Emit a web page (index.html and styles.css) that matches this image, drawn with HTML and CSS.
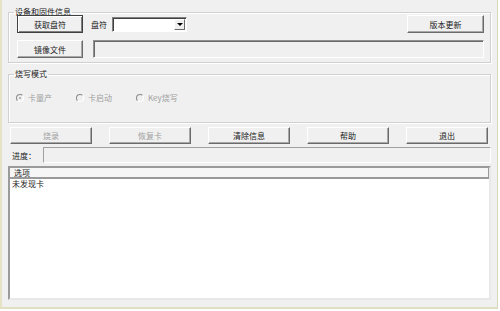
FILE: index.html
```html
<!DOCTYPE html>
<html lang="zh-CN">

<head>
  <meta charset="UTF-8">
  <meta name="viewport" content="width=device-width, initial-scale=1.0">
  <title>量产工具</title>
  <link rel="stylesheet" href="styles.css">
</head>

<body>
  <div class="window">
    <fieldset class="group group-device">
      <legend>设备和固件信息</legend>
      <div class="row row-first">
        <button class="btn btn-default btn-side">获取盘符</button>
        <span class="label">盘符</span>
        <div class="combo"><span class="combo-arrow"></span></div>
        <button class="btn btn-version">版本更新</button>
      </div>
      <div class="row">
        <button class="btn btn-side">镜像文件</button>
        <div class="textbox"></div>
      </div>
    </fieldset>

    <fieldset class="group group-mode">
      <legend>烧写模式</legend>
      <div class="radios">
        <label class="radio-item"><span class="radio checked"></span>卡量产</label>
        <label class="radio-item"><span class="radio"></span>卡启动</label>
        <label class="radio-item"><span class="radio"></span>Key烧写</label>
      </div>
    </fieldset>

    <div class="actions">
      <button class="btn btn-action" disabled>烧录</button>
      <button class="btn btn-action" disabled>恢复卡</button>
      <button class="btn btn-action">清除信息</button>
      <button class="btn btn-action">帮助</button>
      <button class="btn btn-action">退出</button>
    </div>

    <div class="progress-row">
      <span class="progress-label">进度：</span>
      <div class="progress"></div>
    </div>

    <div class="list">
      <div class="list-header">选项</div>
      <div class="list-item">未发现卡</div>
    </div>
  </div>
</body>

</html>
```

FILE: styles.css
```css
/* 全局样式 */
body {
  margin: 0;
  background-color: #fff;
  font-family: "Noto Sans CJK SC", "Noto Sans", sans-serif;
  font-size: 8px;
  color: #1a1a1a;
}

/* 窗口 */
.window {
  width: 498px;
  height: 309px;
  box-sizing: border-box;
  background-color: #f0f0f0;
  border-left: 2px solid #e4e4c4;
  border-right: 1px solid #d8d8b8;
  border-bottom: 2px solid #e0e0c0;
  padding: 0 6px;
  display: flex;
  flex-direction: column;
}

/* 分组框 */
.group {
  margin: 0;
  min-width: 0;
  border: 1px solid #d0d0d0;
  box-shadow: inset 1px 1px 0 #fff, 1px 1px 0 #fff;
  padding: 0 6px 4px 8px;
}

.group legend {
  margin-left: -3px;
  padding: 0 1px;
  line-height: 12px;
}

.group-device {
  margin-top: 6px;
}

.group-mode {
  margin-top: 5px;
  padding-bottom: 18px;
}

.row {
  display: flex;
  align-items: center;
  height: 18px;
  margin-top: 7px;
}

.row-first {
  margin-top: -3px;
}

/* 按钮 */
.btn {
  height: 18px;
  box-sizing: border-box;
  padding: 0;
  font: inherit;
  color: #1a1a1a;
  background-color: #f0f0f0;
  border: 1px solid;
  border-color: #fff #6a6a6a #6a6a6a #fff;
  box-shadow: inset -1px -1px 0 #a8a8a8;
}

.btn:disabled {
  color: #a0a0a0;
}

.btn-default {
  border-color: #404040;
  box-shadow: inset 1px 1px 0 #fff, inset -1px -1px 0 #808080;
}

.btn-side {
  width: 66px;
}

.btn-version {
  width: 77px;
  margin-left: auto;
}

.label {
  margin-left: 8px;
  white-space: nowrap;
}

/* 下拉框 */
.combo {
  position: relative;
  width: 75px;
  height: 15px;
  margin-left: 5px;
  box-sizing: border-box;
  background-color: #fff;
  border: 1px solid;
  border-color: #808080 #fff #fff #808080;
  box-shadow: inset 1px 1px 0 #404040;
}

.combo-arrow {
  position: absolute;
  right: 1px;
  top: 1px;
  width: 11px;
  height: 11px;
  box-sizing: border-box;
  background-color: #f0f0f0;
  border: 1px solid;
  border-color: #fff #6a6a6a #6a6a6a #fff;
}

.combo-arrow::after {
  content: "";
  position: absolute;
  left: 2px;
  top: 3px;
  border-left: 3px solid transparent;
  border-right: 3px solid transparent;
  border-top: 3px solid #000;
}

/* 文本框 */
.textbox {
  flex: 1;
  height: 18px;
  margin-left: 10px;
  box-sizing: border-box;
  background-color: #f0f0f0;
  border: 1px solid;
  border-color: #909090 #fff #fff #909090;
  box-shadow: inset 1px 1px 0 #6a6a6a;
}

/* 单选按钮 */
.radios {
  display: flex;
  padding-top: 12px;
  line-height: 12px;
  color: #a0a0a0;
}

.radio-item {
  display: flex;
  align-items: center;
  width: 61px;
  margin-left: -1px;
}

.radio-item:last-child {
  width: auto;
}

.radio {
  position: relative;
  width: 8px;
  height: 8px;
  box-sizing: border-box;
  margin-right: 4px;
  border-radius: 50%;
  border: 1px solid;
  border-color: #8a8a8a #fff #fff #8a8a8a;
  background-color: #f0f0f0;
}

.radio.checked::after {
  content: "";
  position: absolute;
  left: 2px;
  top: 2px;
  width: 2px;
  height: 2px;
  border-radius: 50%;
  background-color: #a0a0a0;
}

/* 操作按钮 */
.actions {
  display: flex;
  gap: 17px;
  margin-top: 4px;
  padding-left: 2px;
}

.btn-action {
  width: 82px;
  height: 17px;
}

/* 进度条 */
.progress-row {
  display: flex;
  align-items: center;
  margin-top: 3px;
  padding-left: 4px;
}

.progress-label {
  width: 31px;
}

.progress {
  flex: 1;
  height: 16px;
  box-sizing: border-box;
  background-color: #f0f0f0;
  border: 1px solid;
  border-color: #a0a0a0 #fff #fff #a0a0a0;
}

/* 列表 */
.list {
  height: 134px;
  margin-top: 3px;
  box-sizing: border-box;
  background-color: #fff;
  border: 2px solid;
  border-color: #9a9a9a #e8e8e8 #e8e8e8 #9a9a9a;
  line-height: 10px;
}

.list-header {
  height: 11px;
  box-sizing: border-box;
  padding-left: 4px;
  background-color: #f6f6f6;
  border-bottom: 2px solid #9a9a9a;
  border-right: 1px solid #9a9a9a;
}

.list-item {
  padding-left: 2px;
}
```
